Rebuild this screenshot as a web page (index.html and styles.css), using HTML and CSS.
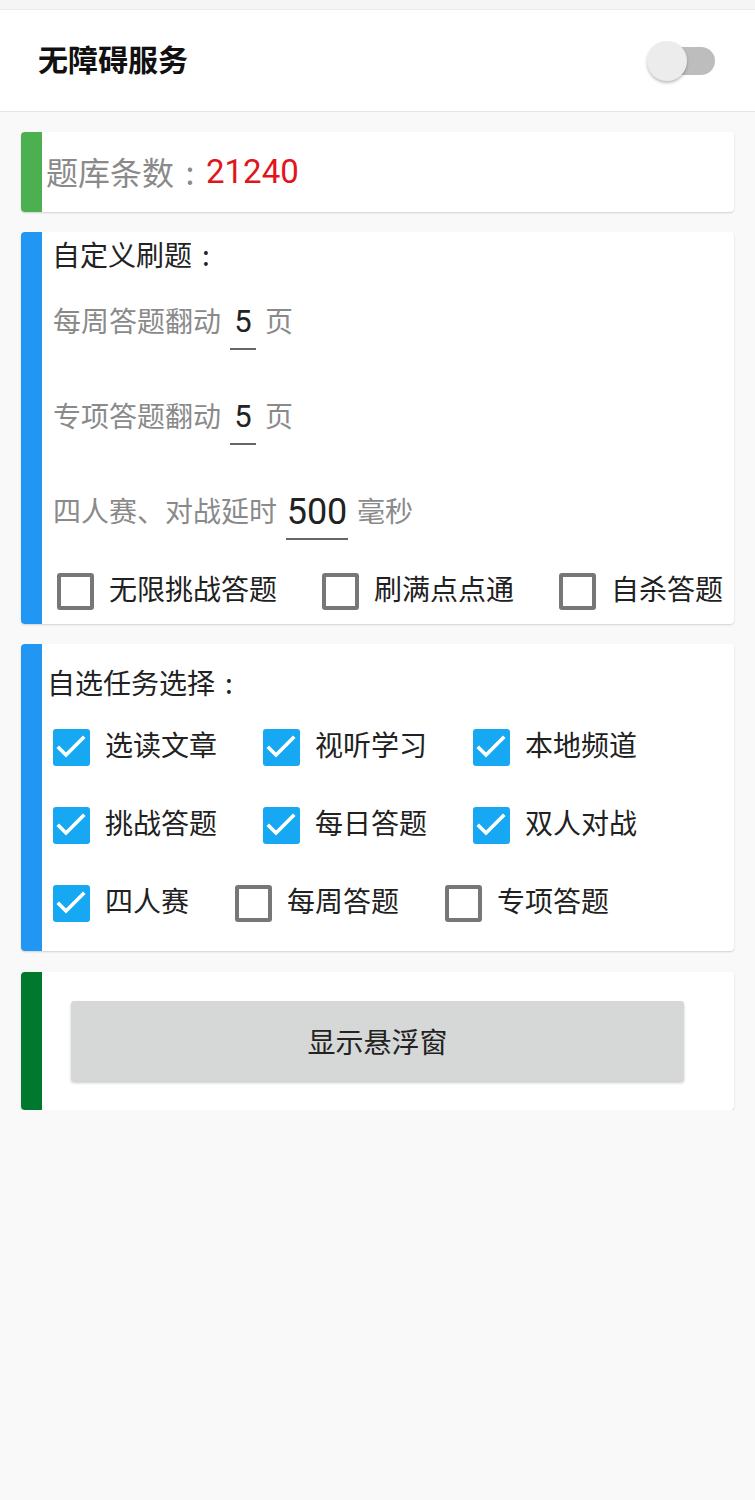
FILE: index.html
```html
<!DOCTYPE html>
<html lang="zh-CN">
<head>
<meta charset="utf-8">
<title>无障碍服务</title>
<link rel="stylesheet" href="styles.css">
</head>
<body>
<div class="topstrip"></div>
<header class="header">
  <span class="header-title">无障碍服务</span>
  <span class="switch"><span class="switch-track"></span><span class="switch-thumb"></span></span>
</header>

<section class="card card-count">
  <div class="bar bar-green"></div>
  <div class="card-body count-body">
    <span class="count-label">题库条数<span class="colon">:</span></span><span class="count-num">21240</span>
  </div>
</section>

<section class="card card-custom">
  <div class="bar bar-blue"></div>
  <div class="card-body custom-body">
    <div class="card-title">自定义刷题<span class="colon">:</span></div>
    <div class="input-row">
      <span class="input-label">每周答题翻动</span>
      <span class="num-input num-small">5</span>
      <span class="input-label">页</span>
    </div>
    <div class="input-row">
      <span class="input-label">专项答题翻动</span>
      <span class="num-input num-small">5</span>
      <span class="input-label">页</span>
    </div>
    <div class="input-row">
      <span class="input-label">四人赛、对战延时</span>
      <span class="num-input num-large">500</span>
      <span class="input-label">毫秒</span>
    </div>
    <div class="check-row custom-checks">
      <label class="check-item"><span class="box"></span><span class="check-label">无限挑战答题</span></label>
      <label class="check-item"><span class="box"></span><span class="check-label">刷满点点通</span></label>
      <label class="check-item"><span class="box"></span><span class="check-label">自杀答题</span></label>
    </div>
  </div>
</section>

<section class="card card-tasks">
  <div class="bar bar-blue"></div>
  <div class="card-body tasks-body">
    <div class="card-title tasks-title">自选任务选择<span class="colon">:</span></div>
    <div class="check-row task-row">
      <label class="check-item"><span class="box checked"><svg viewBox="0 0 37 37"><polyline points="6,19 13,26 30,9"/></svg></span><span class="check-label">选读文章</span></label>
      <label class="check-item"><span class="box checked"><svg viewBox="0 0 37 37"><polyline points="6,19 13,26 30,9"/></svg></span><span class="check-label">视听学习</span></label>
      <label class="check-item"><span class="box checked"><svg viewBox="0 0 37 37"><polyline points="6,19 13,26 30,9"/></svg></span><span class="check-label">本地频道</span></label>
    </div>
    <div class="check-row task-row">
      <label class="check-item"><span class="box checked"><svg viewBox="0 0 37 37"><polyline points="6,19 13,26 30,9"/></svg></span><span class="check-label">挑战答题</span></label>
      <label class="check-item"><span class="box checked"><svg viewBox="0 0 37 37"><polyline points="6,19 13,26 30,9"/></svg></span><span class="check-label">每日答题</span></label>
      <label class="check-item"><span class="box checked"><svg viewBox="0 0 37 37"><polyline points="6,19 13,26 30,9"/></svg></span><span class="check-label">双人对战</span></label>
    </div>
    <div class="check-row task-row">
      <label class="check-item"><span class="box checked"><svg viewBox="0 0 37 37"><polyline points="6,19 13,26 30,9"/></svg></span><span class="check-label">四人赛</span></label>
      <label class="check-item"><span class="box"></span><span class="check-label">每周答题</span></label>
      <label class="check-item"><span class="box"></span><span class="check-label">专项答题</span></label>
    </div>
  </div>
</section>

<section class="card card-button">
  <div class="bar bar-dark"></div>
  <div class="card-body button-body">
    <button class="float-btn">显示悬浮窗</button>
  </div>
</section>
</body>
</html>
```

FILE: styles.css
```css
* { box-sizing: border-box; }
html, body {
  margin: 0;
  padding: 0;
  background: #f9f9f9;
  font-family: Roboto, "Noto Sans CJK SC", sans-serif;
  color: #212121;
}
.colon {
  display: inline-block;
  width: 1em;
  text-align: center;
  font-family: "Noto Sans CJK SC", sans-serif;
}
.topstrip {
  height: 10px;
  background: #f5f5f5;
  border-bottom: 1px solid #ececec;
}
.header {
  height: 102px;
  background: #fff;
  border-bottom: 1px solid #e6e6e6;
  display: flex;
  align-items: center;
  justify-content: space-between;
  padding: 0 40px 0 38px;
}
.header-title {
  font-size: 30px;
  font-weight: 700;
  color: #111;
  line-height: 34px;
}
.switch {
  position: relative;
  width: 68px;
  height: 42px;
  display: block;
}
.switch-track {
  position: absolute;
  left: 8px;
  right: 0;
  top: 7px;
  height: 28px;
  border-radius: 14px;
  background: #bdbdbd;
}
.switch-thumb {
  position: absolute;
  left: 0;
  top: 1px;
  width: 40px;
  height: 40px;
  border-radius: 50%;
  background: #ececec;
  box-shadow: 0 2px 3px rgba(0,0,0,0.25);
}
.card {
  margin: 20px 21px 0;
  background: #fff;
  border-radius: 4px;
  overflow: hidden;
  display: flex;
  box-shadow: 0 1px 2px rgba(0,0,0,0.16);
}
.card-button { margin-top: 21px; }
.bar { width: 21px; flex: none; }
.bar-green { background: #4caf50; }
.bar-blue { background: #2196f3; }
.bar-dark { background: #00792f; }
.card-body { flex: 1; }

.count-body {
  height: 80px;
  display: flex;
  align-items: center;
  padding-left: 4px;
  line-height: 40px;
}
.count-label { color: #8a8a8a; font-size: 32px; }
.count-num { color: #e0161c; font-size: 33px; }

.custom-body { padding: 6px 0 11px 10px; }
.card-title {
  font-size: 28px;
  line-height: 32px;
  height: 32px;
  color: #222;
  white-space: nowrap;
}
.input-row {
  height: 95px;
  display: flex;
  align-items: center;
  padding-left: 1px;
}
.card-title + .input-row { margin-top: 5px; }
.input-label {
  font-size: 28px;
  line-height: 36px;
  color: #8a8a8a;
}
.num-input {
  display: block;
  text-align: center;
  line-height: 36px;
  padding: 8px 0;
  border-bottom: 2px solid #666;
  color: #222;
  margin: 0 9px;
  height: 54px;
}
.num-small { width: 26px; font-size: 31px; }
.num-large { width: 62px; font-size: 36px; }

.check-row {
  display: flex;
  align-items: center;
}
.custom-checks {
  height: 44px;
  margin-top: 9px;
  padding-left: 5px;
  gap: 45px;
}
.check-item {
  display: flex;
  align-items: center;
}
.box {
  width: 37px;
  height: 37px;
  border: 4px solid #777;
  border-radius: 3px;
  flex: none;
  display: block;
}
.box.checked {
  border: none;
  background: #16a8f2;
}
.box svg {
  display: block;
  width: 37px;
  height: 37px;
}
.box polyline {
  fill: none;
  stroke: #fff;
  stroke-width: 3.6;
  stroke-linecap: square;
  stroke-linejoin: miter;
}
.check-label {
  margin-left: 15px;
  font-size: 28px;
  line-height: 36px;
  color: #212121;
}

.tasks-body { padding: 22px 0 9px 5px; }
.tasks-title { margin-bottom: 10px; }
.task-row {
  height: 78px;
  padding-left: 6px;
  gap: 46px;
}

.button-body {
  height: 138px;
  padding: 29px 50px 0 29px;
}
.float-btn {
  display: block;
  width: 100%;
  height: 80px;
  border: none;
  border-radius: 3px;
  background: #d6d7d7;
  box-shadow: 0 2px 3px rgba(0,0,0,0.2);
  font-family: Roboto, "Noto Sans CJK SC", sans-serif;
  font-size: 28px;
  color: #222;
}
```
